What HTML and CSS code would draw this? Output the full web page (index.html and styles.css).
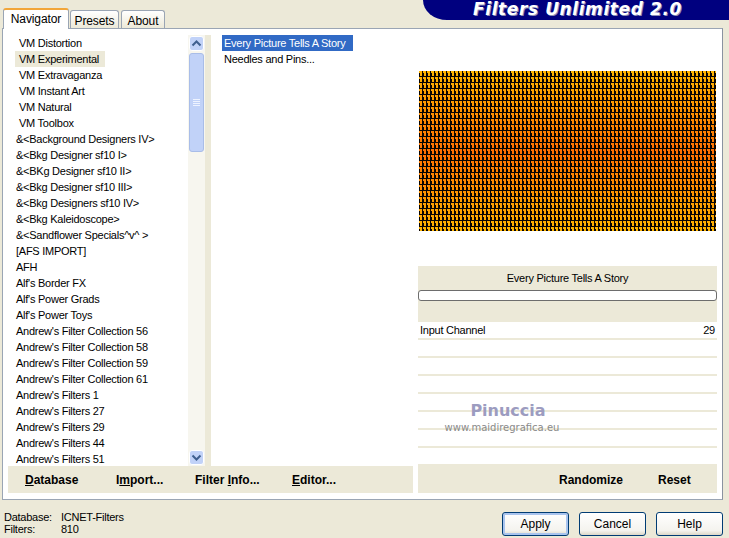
FILE: index.html
```html
<!DOCTYPE html>
<html lang="en">
<head>
  <meta charset="UTF-8">
  <meta name="viewport" content="width=device-width, initial-scale=1.0">
  <title>Filters Unlimited 2.0</title>
  <link rel="stylesheet" href="styles.css">
</head>
<body>
  <div class="dialog">
    <div class="top">
      <div class="tabs">
        <div class="tab active">Navigator</div>
        <div class="tab tab-presets">Presets</div>
        <div class="tab tab-about">About</div>
      </div>
      <div class="brand">Filters Unlimited 2.0</div>
    </div>

    <div class="panel">
      <div class="left">
        <div class="lists">
          <ul class="categories">
            <li class="in">VM Distortion</li>
            <li class="in current">VM Experimental</li>
            <li class="in">VM Extravaganza</li>
            <li class="in">VM Instant Art</li>
            <li class="in">VM Natural</li>
            <li class="in">VM Toolbox</li>
            <li>&amp;&lt;Background Designers IV&gt;</li>
            <li>&amp;&lt;Bkg Designer sf10 I&gt;</li>
            <li>&amp;&lt;BKg Designer sf10 II&gt;</li>
            <li>&amp;&lt;Bkg Designer sf10 III&gt;</li>
            <li>&amp;&lt;Bkg Designers sf10 IV&gt;</li>
            <li>&amp;&lt;Bkg Kaleidoscope&gt;</li>
            <li>&amp;&lt;Sandflower Specials^v^ &gt;</li>
            <li>[AFS IMPORT]</li>
            <li>AFH</li>
            <li>Alf's Border FX</li>
            <li>Alf's Power Grads</li>
            <li>Alf's Power Toys</li>
            <li>Andrew's Filter Collection 56</li>
            <li>Andrew's Filter Collection 58</li>
            <li>Andrew's Filter Collection 59</li>
            <li>Andrew's Filter Collection 61</li>
            <li>Andrew's Filters 1</li>
            <li>Andrew's Filters 27</li>
            <li>Andrew's Filters 29</li>
            <li>Andrew's Filters 44</li>
            <li>Andrew's Filters 51</li>
          </ul>
          <div class="scrollbar">
            <div class="arrow">
              <svg width="11" height="7" viewBox="0 0 11 7"><path d="M1.5 5.5 5.5 1.5 9.5 5.5" fill="none" stroke="#3f5f8f" stroke-width="2"/></svg>
            </div>
            <div class="thumb">
              <svg width="7" height="8" viewBox="0 0 7 8"><path d="M0 .5H7M0 2.5H7M0 4.5H7M0 6.5H7" stroke="#eef3ff"/></svg>
            </div>
            <div class="track"></div>
            <div class="arrow">
              <svg width="11" height="7" viewBox="0 0 11 7"><path d="M1.5 1.5 5.5 5.5 9.5 1.5" fill="none" stroke="#3f5f8f" stroke-width="2"/></svg>
            </div>
          </div>
          <ul class="effects">
            <li><span class="selected">Every Picture Tells A Story</span></li>
            <li class="effect">Needles and Pins...</li>
          </ul>
        </div>
        <div class="toolbar left-tools">
          <span class="tool tool-db"><u>D</u>atabase</span>
          <span class="tool tool-import">I<u>m</u>port...</span>
          <span class="tool tool-info">Filter <u>I</u>nfo...</span>
          <span class="tool"><u>E</u>ditor...</span>
        </div>
      </div>

      <div class="right">
        <div class="preview-box">
          <svg class="preview" width="297" height="160" viewBox="0 0 297 160">
            <defs>
              <linearGradient id="heat" x1="0" y1="0" x2="0" y2="1">
                <stop offset="0" stop-color="#ffb400"/>
                <stop offset="0.5" stop-color="#ff7000"/>
                <stop offset="1" stop-color="#ffb400"/>
              </linearGradient>
              <pattern id="ys" width="4" height="6" patternUnits="userSpaceOnUse">
                <path d="M0 0H3V2H0ZM1 2H3V5H1Z" fill="#fff"/>
              </pattern>
              <mask id="ymask">
                <rect width="297" height="160" fill="url(#ys)"/>
              </mask>
            </defs>
            <rect width="297" height="160" fill="#0a0500"/>
            <rect width="297" height="160" fill="url(#heat)" mask="url(#ymask)"/>
          </svg>
        </div>
        <div class="effect-head">
          <div class="effect-name">Every Picture Tells A Story</div>
          <div class="progress"></div>
        </div>
        <div class="sliders">
          <div class="slider"><span>Input Channel</span><span>29</span></div>
          <div class="slider"></div>
          <div class="slider"></div>
          <div class="slider"></div>
          <div class="slider"></div>
          <div class="slider"></div>
          <div class="slider"></div>
          <div class="slider"></div>
          <div class="watermark">
            <div class="wm-name">Pinuccia</div>
            <div class="wm-url">www.maidiregrafica.eu</div>
          </div>
        </div>
        <div class="toolbar right-tools">
          <span class="tool tool-random">Randomize</span>
          <span class="tool">Reset</span>
        </div>
      </div>
    </div>

    <div class="footer">
      <div class="info">
        <div class="info-row"><span class="info-label">Database:</span><span>ICNET-Filters</span></div>
        <div class="info-row"><span class="info-label">Filters:</span><span>810</span></div>
      </div>
      <div class="buttons">
        <button class="btn default">Apply</button>
        <button class="btn">Cancel</button>
        <button class="btn">Help</button>
      </div>
    </div>
  </div>
</body>
</html>
```

FILE: styles.css
```css
* {
  box-sizing: border-box;
}

html, body {
  margin: 0;
  padding: 0;
}

body {
  width: 729px;
  height: 538px;
  overflow: hidden;
  background: #ece9d8;
  font-family: "Liberation Sans", Arial, sans-serif;
  font-size: 11px;
  letter-spacing: -0.25px;
  color: #000;
}

.dialog {
  width: 729px;
  height: 538px;
  display: flex;
  flex-direction: column;
}

/* tabs and banner */
.top {
  height: 28px;
  display: flex;
  justify-content: space-between;
  align-items: flex-start;
  padding-left: 3px;
}

.tabs {
  display: flex;
  align-items: flex-end;
  height: 28px;
  gap: 2px;
}

.tab {
  height: 18px;
  padding-top: 3px;
  text-align: center;
  border: 1px solid #9aa5b4;
  border-bottom: none;
  border-radius: 3px 3px 0 0;
  background: linear-gradient(#fff, #ece9d8);
  line-height: 14px;
  font-size: 12px;
  letter-spacing: -0.1px;
}

.tab-presets {
  width: 49px;
}

.tab-about {
  width: 44px;
}

.tab.active {
  height: 21px;
  width: 66px;
  padding-top: 2px;
  margin-right: -1px;
  margin-bottom: -1px;
  border-top: 2px solid #f2a63a;
  background: #fff;
  position: relative;
}

.brand {
  width: 306px;
  height: 20px;
  background: #00007f;
  border-bottom-left-radius: 24px 20px;
  color: #fff;
  font-family: "DejaVu Sans", sans-serif;
  font-size: 17px;
  line-height: 19px;
  font-weight: bold;
  font-style: italic;
  letter-spacing: 0.6px;
  padding-left: 50px;
  white-space: nowrap;
  text-shadow: 1px 1px 0 #8c8cb4;
}

/* main panel */
.panel {
  width: 721px;
  height: 472px;
  margin-left: 2px;
  background: #fff;
  border: 1px solid #9aa5b4;
  border-right-color: #8a93a0;
  padding: 6px 5px 6px 5px;
  display: flex;
  gap: 5px;
}

.left {
  width: 405px;
  display: flex;
  flex-direction: column;
}

.lists {
  flex: 1;
  display: flex;
  min-height: 0;
}

ul {
  list-style: none;
  margin: 0;
  padding: 0;
}

li {
  height: 16px;
  line-height: 16px;
  white-space: nowrap;
}

.categories {
  width: 180px;
  padding-left: 8px;
  overflow: hidden;
}

.categories li.in {
  padding-left: 3px;
}

.categories li.current {
  background: #ece9d8;
  width: 90px;
  margin-left: -1px;
  padding-left: 4px;
}

.scrollbar {
  width: 17px;
  margin-right: 6px;
  display: flex;
  flex-direction: column;
  position: relative;
  background: #f7f6ef;
  padding: 1px;
}

.scrollbar::after {
  content: "";
  position: absolute;
  top: 0;
  bottom: 0;
  right: -6px;
  width: 6px;
  background: #ece9d8;
}

.arrow {
  height: 15px;
  display: flex;
  align-items: center;
  justify-content: center;
  border: 1px solid #fff;
  border-radius: 3px;
  background: #c1d2f8;
}

.thumb {
  height: 99px;
  margin-top: 2px;
  border: 1px solid #a9bde8;
  border-radius: 3px;
  background: #c1d2f8;
  display: flex;
  align-items: center;
  justify-content: center;
}

.track {
  flex: 1;
}

.effects {
  width: 201px;
  padding: 0 0 0 11px;
}

.effect {
  padding-left: 2px;
}

.selected {
  display: inline-block;
  background: #316ac5;
  color: #fff;
  padding: 0 2px;
  height: 16px;
  width: 131px;
  vertical-align: top;
}

.toolbar {
  height: 27px;
  background: #ece9d8;
  display: flex;
  align-items: center;
  font-size: 12px;
  font-weight: bold;
  letter-spacing: 0;
  flex-shrink: 0;
}

.left-tools {
  padding-left: 17px;
}

.tool-db {
  width: 91px;
}

.tool-import {
  width: 79px;
}

.tool-info {
  width: 97px;
}

.right-tools {
  padding-left: 141px;
}

.tool-random {
  width: 99px;
}

/* right column */
.right {
  width: 299px;
  display: flex;
  flex-direction: column;
}

.preview-box {
  height: 233px;
  padding: 36px 1px 0;
}

.preview {
  display: block;
}

.effect-head {
  height: 56px;
  background: #ece9d8;
  padding-top: 3px;
}

.effect-name {
  height: 21px;
  line-height: 19px;
  text-align: center;
}

.progress {
  height: 11px;
  background: #fff;
  border: 1px solid #6d6d6d;
  border-radius: 3px;
}

.sliders {
  flex: 1;
  position: relative;
}

.slider {
  height: 18px;
  border-bottom: 2px solid #ece9d8;
  display: flex;
  justify-content: space-between;
  padding: 1px 2px 0;
  line-height: 15px;
}

.watermark {
  position: absolute;
  left: 24px;
  top: 79px;
  width: 120px;
  text-align: center;
  color: #9c9cc0;
  letter-spacing: 0;
}

.wm-name {
  font-family: "DejaVu Sans", sans-serif;
  font-size: 16px;
  font-weight: bold;
  line-height: 20px;
  margin-left: 12px;
}

.wm-url {
  font-family: "DejaVu Sans", sans-serif;
  font-size: 10px;
  line-height: 13px;
  color: #8a8a8a;
}

/* status and buttons */
.footer {
  flex: 1;
  display: flex;
  justify-content: space-between;
  padding: 11px 6px 0 4px;
}

.info-row {
  display: flex;
  height: 12px;
  line-height: 12px;
}

.info-label {
  width: 57px;
}

.buttons {
  display: flex;
  gap: 10px;
  padding-top: 1px;
}

.btn {
  width: 67px;
  height: 24px;
  padding: 0;
  border: 1px solid #003c74;
  border-radius: 3px;
  background: linear-gradient(#fff, #f4f3ee 80%, #dcd8c8);
  font-family: inherit;
  font-size: 12px;
  color: #000;
}

.btn.default {
  box-shadow: inset 0 0 0 2px #a9c4ee;
}
```
